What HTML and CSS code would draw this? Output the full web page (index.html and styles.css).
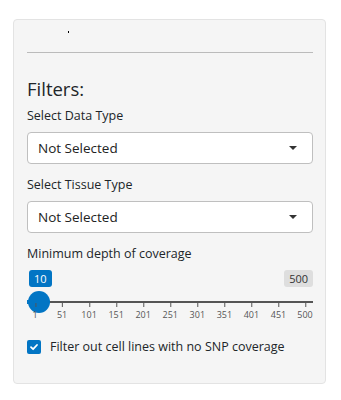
FILE: index.html
```html
<!DOCTYPE html>
<html lang="en">
  <head>
    <meta charset="UTF-8" />
    <meta name="viewport" content="width=device-width, initial-scale=1.0" />
    <title>Filters</title>
    <link rel="stylesheet" href="styles.css">
  </head>
  <body>
    <div class="well">
      <div class="text-output"><span class="dot"></span></div>
      <hr class="divider" />

      <h3 class="filters-title">Filters:</h3>

      <div class="form-group">
        <label class="control-label">Select Data Type</label>
        <div class="select-box">
          <span>Not Selected</span>
          <span class="caret"></span>
        </div>
      </div>

      <div class="form-group">
        <label class="control-label">Select Tissue Type</label>
        <div class="select-box">
          <span>Not Selected</span>
          <span class="caret"></span>
        </div>
      </div>

      <div class="form-group">
        <label class="control-label">Minimum depth of coverage</label>
        <div class="slider">
          <span class="slider-min">10</span>
          <span class="slider-max">500</span>
          <div class="slider-line"></div>
          <div class="slider-bar"></div>
          <span class="slider-handle"></span>
          <div class="slider-grid">
            <span class="grid-tick" style="left: 0%"><i></i>1</span>
            <span class="grid-tick" style="left: 10.02%"><i></i>51</span>
            <span class="grid-tick" style="left: 20.04%"><i></i>101</span>
            <span class="grid-tick" style="left: 30.06%"><i></i>151</span>
            <span class="grid-tick" style="left: 40.08%"><i></i>201</span>
            <span class="grid-tick" style="left: 50.1%"><i></i>251</span>
            <span class="grid-tick" style="left: 60.12%"><i></i>301</span>
            <span class="grid-tick" style="left: 70.14%"><i></i>351</span>
            <span class="grid-tick" style="left: 80.16%"><i></i>401</span>
            <span class="grid-tick" style="left: 90.18%"><i></i>451</span>
            <span class="grid-tick" style="left: 100%"><i></i>500</span>
          </div>
        </div>
      </div>

      <div class="checkbox">
        <span class="check-input">
          <svg width="10" height="10" viewBox="0 0 10 10">
            <path d="M2 5.2 L4.1 7.2 L8 3" fill="none" stroke="#fff" stroke-width="1.8" stroke-linecap="round" stroke-linejoin="round" />
          </svg>
        </span>
        <span class="check-label">Filter out cell lines with no SNP coverage</span>
      </div>
    </div>
  </body>
</html>
```

FILE: styles.css
```css
* {
  margin: 0;
  padding: 0;
  box-sizing: border-box;
  font-family: "Open Sans", "Liberation Sans", sans-serif;
}

body {
  background-color: #ffffff;
  color: #212529;
  padding: 19px 15px 0 13px;
}

.well {
  width: 313px;
  background-color: #f5f5f5;
  border: 1px solid #e3e3e3;
  border-radius: 4px;
  padding: 11px 12px 26px 13px;
}

.text-output {
  height: 21px;
  padding-left: 41px;
}

.dot {
  display: block;
  width: 1px;
  height: 2px;
  background: #000;
}

.divider {
  border: 0;
  border-top: 1px solid #bbbbbb;
}

.filters-title {
  font-size: 18.5px;
  font-weight: 400;
  line-height: 24px;
  margin-top: 24px;
  margin-bottom: 5px;
}

.form-group {
  margin-bottom: 11px;
}

.control-label {
  display: block;
  font-size: 12.5px;
  line-height: 20px;
  margin-bottom: 6px;
}

.select-box {
  display: flex;
  align-items: center;
  justify-content: space-between;
  height: 32px;
  background: #ffffff;
  border: 1px solid #bfbfbf;
  border-radius: 4px;
  padding: 0 15px 0 10px;
  font-size: 13.5px;
  color: #222;
}

.caret {
  width: 0;
  height: 0;
  border-left: 4px solid transparent;
  border-right: 4px solid transparent;
  border-top: 4px solid #333;
}

.slider {
  position: relative;
  height: 52px;
}

.slider-min,
.slider-max {
  position: absolute;
  top: 0;
  height: 17px;
  line-height: 17px;
  font-size: 11px;
  padding: 0 5px;
  border-radius: 3px;
}

.slider-min {
  left: 2px;
  background: #0275c4;
  color: #ffffff;
}

.slider-max {
  right: 0;
  background: #dedede;
  color: #333;
}

.slider-line {
  position: absolute;
  top: 31px;
  left: 0;
  right: 0;
  height: 2px;
  background: #555;
}

.slider-bar {
  position: absolute;
  top: 30px;
  left: 0;
  width: 12px;
  height: 4px;
  background: #0275c4;
}

.slider-handle {
  position: absolute;
  top: 21px;
  left: 1px;
  width: 22px;
  height: 22px;
  border-radius: 50%;
  background: #0275c4;
}

.slider-grid {
  position: absolute;
  top: 33px;
  left: 8px;
  right: 8px;
  height: 18px;
}

.grid-tick {
  position: absolute;
  top: 0;
  transform: translateX(-50%);
  padding-top: 6px;
  font-size: 9px;
  line-height: 12px;
  color: #555;
  text-align: center;
}

.grid-tick i {
  position: absolute;
  top: 0;
  left: 50%;
  width: 1px;
  height: 4px;
  background: #555;
}

.checkbox {
  display: flex;
  align-items: center;
  gap: 9px;
  margin-top: 15px;
}

.check-input {
  display: flex;
  align-items: center;
  justify-content: center;
  width: 14px;
  height: 14px;
  border-radius: 2px;
  background: #0275c4;
}

.check-label {
  font-size: 12.5px;
  line-height: 20px;
}
```
